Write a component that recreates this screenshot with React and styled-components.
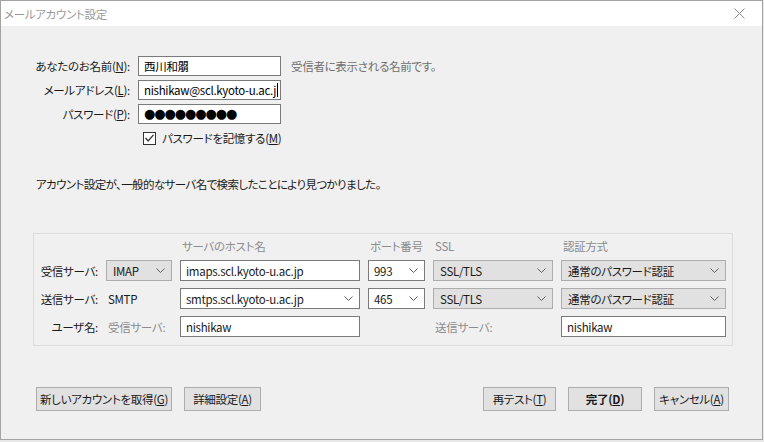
import React from 'react';
import styled, { createGlobalStyle, css } from 'styled-components';

const GlobalStyle = createGlobalStyle`
  html, body {
    margin: 0;
    padding: 0;
    background: #e8e8e8;
  }
  body {
    font-family: "Noto Sans CJK JP", "Noto Sans", sans-serif;
    font-size: 11.5px;
    line-height: 16px;
    letter-spacing: -0.3px;
    color: #1a1a1a;
    font-feature-settings: "palt";
  }
`;

const fieldBox = css`
  box-sizing: border-box;
  height: 21px;
  display: flex;
  align-items: center;
  padding: 0 5px;
  white-space: nowrap;
  overflow: hidden;
`;

const Window = styled.div`
  box-sizing: border-box;
  width: 763px;
  height: 440px;
  border: 1px solid #a3a3a3;
  background: #f0f0f0;
  display: flex;
  flex-direction: column;
`;

const TitleBar = styled.div`
  flex: none;
  height: 25px;
  background: #fff;
  display: flex;
  align-items: center;
  justify-content: space-between;
  padding: 0 17px 0 3px;
  color: #9a9a9a;
`;

const Body = styled.div`
  flex: 1;
  padding: 30px 0 0 0;
  display: flex;
  flex-direction: column;
`;

const IdentityGrid = styled.div`
  display: grid;
  grid-template-columns: 129px 143px auto;
  grid-auto-rows: 20px;
  column-gap: 8px;
  row-gap: 4px;
  align-items: center;
`;

const Label = styled.div`
  text-align: right;
  color: #1a1a1a;
  white-space: nowrap;
`;

const Hint = styled.div`
  color: #6f6f6f;
  margin-left: 2px;
`;

const TextBox = styled.div`
  ${fieldBox};
  height: 20px;
  background: #fff;
  border: 1px solid #7a7a7a;
  color: #000;
`;

const Dots = styled.span`
  font-family: "DejaVu Sans", sans-serif;
  font-size: 13px;
  letter-spacing: -1.1px;
`;

const Caret = styled.span`
  flex: none;
  display: inline-block;
  width: 1px;
  height: 14px;
  background: #000;
  margin-left: 1px;
`;

const CheckRow = styled.label`
  margin: 6px 0 0 142px;
  display: flex;
  align-items: center;
  gap: 6px;
`;

const CheckBox = styled.span`
  box-sizing: border-box;
  width: 13px;
  height: 13px;
  border: 1px solid #333;
  background: #fff;
  display: flex;
  align-items: center;
  justify-content: center;
`;

const Message = styled.p`
  margin: 30px 0 0 35px;
  letter-spacing: -0.6px;
`;

const GroupBox = styled.div`
  box-sizing: border-box;
  margin: 41px 0 0 32px;
  width: 700px;
  border: 1px solid #dcdcdc;
  padding: 4px 0 8px 0;
  display: grid;
  grid-template-columns: 64px 66px 180px 57px 120px 165px;
  grid-template-rows: 15px repeat(3, 21px);
  column-gap: 8px;
  row-gap: 7px;
  align-items: center;
`;

const ColHead = styled.div`
  grid-column: ${(p) => p.col};
  color: #8c8c8c;
  padding-left: 2px;
  white-space: nowrap;
`;

const Field = styled.div`
  ${fieldBox};
  background: #fff;
  border: 1px solid #7a7a7a;
`;

const SelectBox = styled.div`
  ${fieldBox};
  justify-content: space-between;
  padding: 0 6px 0 ${(p) => (p.gray ? 6 : 5)}px;
  background: ${(p) => (p.gray ? '#e1e1e1' : '#fff')};
  border: 1px solid ${(p) => (p.gray ? '#adadad' : '#7a7a7a')};
`;

const Static = styled.div`
  padding-left: 2px;
  color: ${(p) => (p.muted ? '#8c8c8c' : '#1a1a1a')};
  white-space: nowrap;
`;

const Spacer = styled.div``;

const ButtonBar = styled.div`
  margin-top: 41px;
  padding: 0 33px 0 35px;
  display: flex;
  align-items: center;
`;

const ButtonGroup = styled.div`
  display: flex;
  gap: 12px;
  margin-left: ${(p) => (p.right ? 'auto' : '0')};
`;

const Button = styled.button`
  box-sizing: border-box;
  width: ${(p) => p.w}px;
  height: 24px;
  background: #e1e1e1;
  border: 1px solid #adadad;
  font: inherit;
  font-feature-settings: "palt";
  letter-spacing: inherit;
  font-weight: ${(p) => (p.primary ? 700 : 400)};
  color: #1a1a1a;
  padding: 0;
  white-space: nowrap;
`;

function Chevron() {
  return (
    <svg width="9" height="5" viewBox="0 0 9 5">
      <path d="M0.5 0.5 L4.5 4.5 L8.5 0.5" fill="none" stroke="#606060" strokeWidth="1" />
    </svg>
  );
}

function Select({ value, gray }) {
  return (
    <SelectBox gray={gray}>
      <span>{value}</span>
      <Chevron />
    </SelectBox>
  );
}

export default function App() {
  return (
    <>
      <GlobalStyle />
      <Window>
        <TitleBar>
          <span>メールアカウント設定</span>
          <svg width="11" height="11" viewBox="0 0 11 11">
            <path d="M0.5 0.5 L10.5 10.5 M10.5 0.5 L0.5 10.5" stroke="#8a8a8a" strokeWidth="1" />
          </svg>
        </TitleBar>
        <Body>
          <IdentityGrid>
            <Label>あなたのお名前(<u>N</u>):</Label>
            <TextBox>西川和朤</TextBox>
            <Hint>受信者に表示される名前です。</Hint>
            <Label>メールアドレス(<u>L</u>):</Label>
            <TextBox>nishikaw@scl.kyoto-u.ac.j<Caret /></TextBox>
            <Spacer />
            <Label>パスワード(<u>P</u>):</Label>
            <TextBox><Dots>●●●●●●●●●</Dots></TextBox>
            <Spacer />
          </IdentityGrid>
          <CheckRow>
            <CheckBox>
              <svg width="9" height="8" viewBox="0 0 9 8">
                <path d="M0.5 4 L3.2 6.8 L8.5 0.8" fill="none" stroke="#222" strokeWidth="1.2" />
              </svg>
            </CheckBox>
            <span>パスワードを記憶する(<u>M</u>)</span>
          </CheckRow>
          <Message>アカウント設定が、一般的なサーバ名で検索したことにより見つかりました。</Message>

          <GroupBox>
            <ColHead col={3}>サーバのホスト名</ColHead>
            <ColHead col={4}>ポート番号</ColHead>
            <ColHead col={5}>SSL</ColHead>
            <ColHead col={6}>認証方式</ColHead>

            <Label>受信サーバ:</Label>
            <Select value="IMAP" gray />
            <Field>imaps.scl.kyoto-u.ac.jp</Field>
            <Select value="993" />
            <Select value="SSL/TLS" gray />
            <Select value="通常のパスワード認証" gray />

            <Label>送信サーバ:</Label>
            <Static>SMTP</Static>
            <Select value="smtps.scl.kyoto-u.ac.jp" />
            <Select value="465" />
            <Select value="SSL/TLS" gray />
            <Select value="通常のパスワード認証" gray />

            <Label>ユーザ名:</Label>
            <Static muted>受信サーバ:</Static>
            <Field>nishikaw</Field>
            <Spacer />
            <Static muted>送信サーバ:</Static>
            <Field>nishikaw</Field>
          </GroupBox>

          <ButtonBar>
            <ButtonGroup>
              <Button w={136}>新しいアカウントを取得(<u>G</u>)</Button>
              <Button w={77}>詳細設定(<u>A</u>)</Button>
            </ButtonGroup>
            <ButtonGroup right>
              <Button w={73}>再テスト(<u>T</u>)</Button>
              <Button w={74} primary>完了(<u>D</u>)</Button>
              <Button w={75}>キャンセル(<u>A</u>)</Button>
            </ButtonGroup>
          </ButtonBar>
        </Body>
      </Window>
    </>
  );
}
